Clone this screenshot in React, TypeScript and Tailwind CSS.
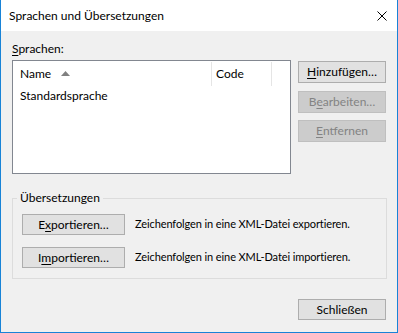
import React from "react";

function U({ children }: { children: React.ReactNode }) {
  return <span className="underline underline-offset-[2px] decoration-[1px]">{children}</span>;
}

function WinButton({
  children,
  disabled,
  className = "",
}: {
  children: React.ReactNode;
  disabled?: boolean;
  className?: string;
}) {
  return (
    <button
      className={
        "flex items-center justify-center border text-[12px] leading-none whitespace-nowrap " +
        (disabled
          ? "bg-[#cccccc] border-[#bfbfbf] text-[#838383] "
          : "bg-[#e1e1e1] border-[#adadad] text-black ") +
        className
      }
    >
      {children}
    </button>
  );
}

export default function App() {
  return (
    <div
      className="w-[398px] h-[333px] flex flex-col border-x border-b border-[#1883d7] text-black text-[12px] whitespace-nowrap"
      style={{ fontFamily: 'Lato, "Segoe UI", sans-serif' }}
    >
      {/* Title bar */}
      <div className="h-[31px] bg-white flex items-center justify-between pl-[8px] pr-[10px]">
        <span className="text-[12px]">Sprachen und Übersetzungen</span>
        <svg width="10" height="10" viewBox="0 0 10 10">
          <path d="M0.5 0.5 L9.5 9.5 M9.5 0.5 L0.5 9.5" stroke="#000" strokeWidth="1" />
        </svg>
      </div>

      {/* Body */}
      <div className="flex-1 bg-[#f0f0f0] pl-[11px] pr-[11px] pt-[10px] flex flex-col">
        <div className="h-[19px] leading-[16px]">
          <U>S</U>prachen:
        </div>

        <div className="flex gap-[7px]">
          {/* List view */}
          <div className="w-[279px] h-[114px] border border-[#828790] bg-white">
            <div className="flex h-[24px] mt-[1px] items-center">
              <div className="w-[199px] h-full flex items-center pl-[7px] border-r border-[#e5e5e5]">
                <span>Name</span>
                <svg width="9" height="5" viewBox="0 0 9 5" className="ml-[10px] mb-[1px]">
                  <path d="M4.5 0 L9 5 L0 5 Z" fill="#808080" />
                </svg>
              </div>
              <div className="w-[60px] h-full flex items-center pl-[4px] border-r border-[#e5e5e5]">
                Code
              </div>
            </div>
            <div className="pl-[7px] mt-[2px] leading-[16px]">Standardsprache</div>
          </div>

          {/* Buttons */}
          <div className="flex flex-col pt-[1px]">
            <WinButton className="w-[88px] h-[22px]">
              <U>H</U>inzufügen…
            </WinButton>
            <WinButton disabled className="w-[88px] h-[22px] mt-[8px]">
              B<U>e</U>arbeiten…
            </WinButton>
            <WinButton disabled className="w-[88px] h-[22px] mt-[7px]">
              <U>E</U>ntfernen
            </WinButton>
          </div>
        </div>

        {/* Group box */}
        <fieldset className="mt-[16px] w-[375px] h-[89px] border border-[#dcdcdc] pl-[9px] pt-[8px]">
          <legend className="ml-[-5px] px-[3px] leading-[16px]">Übersetzungen</legend>
          <div className="flex items-center">
            <WinButton className="w-[103px] h-[21px]">
              E<U>x</U>portieren…
            </WinButton>
            <span className="ml-[10px] text-[11px] tracking-[-0.1px]">
              Zeichenfolgen in eine XML-Datei exportieren.
            </span>
          </div>
          <div className="flex items-center mt-[12px]">
            <WinButton className="w-[103px] h-[21px]">
              I<U>m</U>portieren…
            </WinButton>
            <span className="ml-[10px] text-[11px] tracking-[-0.1px]">
              Zeichenfolgen in eine XML-Datei importieren.
            </span>
          </div>
        </fieldset>

        <div className="flex justify-end mt-[20px]">
          <WinButton className="w-[88px] h-[21px]">Schließen</WinButton>
        </div>
      </div>
    </div>
  );
}
